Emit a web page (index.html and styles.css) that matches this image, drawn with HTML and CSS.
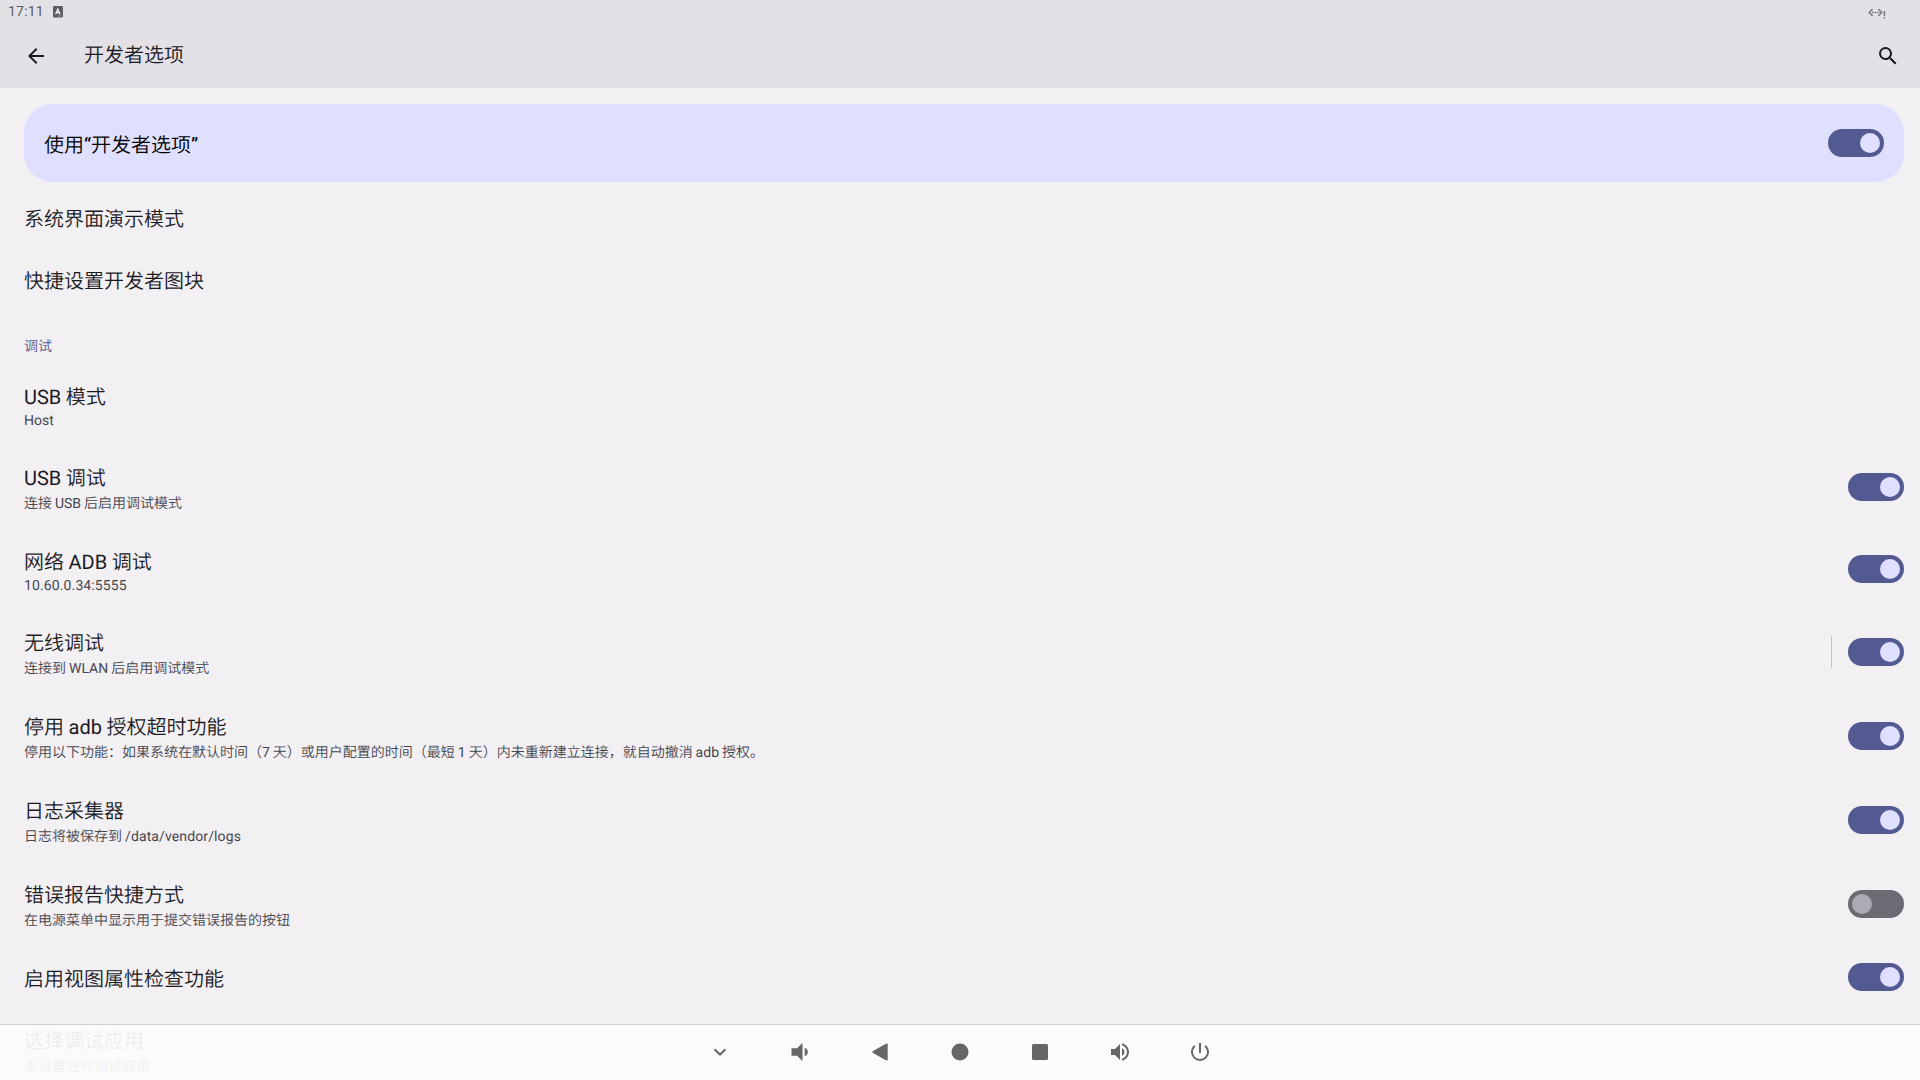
FILE: index.html
```html
<!DOCTYPE html>
<html lang="zh-CN">
<head>
<meta charset="utf-8">
<title>开发者选项</title>
<link rel="stylesheet" href="styles.css">
</head>
<body>
<div class="screen">
  <header class="header">
    <div class="status">
      <span class="clock">17:11</span>
      <svg class="status-app" width="10" height="12" viewBox="0 0 10 12"><rect width="10" height="11.5" rx="1.2" fill="#5c5b5f"/><path d="M2.600 8.200 4.800 3.200 7 8.200M3.300 6.600H6.300" fill="none" stroke="#f4f3f6" stroke-width="1.300"/><path d="M5 10h4" stroke="#aaa9ad" stroke-width="1" stroke-dasharray="1 .7"/></svg>
      <svg class="status-net" width="18" height="12" viewBox="0 0 18 12" fill="none" stroke="#77767a" stroke-width="1.500"><path d="M4.600 1 1.200 4.500 4.600 8M10.400 1 13.800 4.500 10.400 8"/><path d="M4 4.500h8" stroke-dasharray="1.600 1"/><path d="M16.400 3v5M16.400 9v1.500"/></svg>
    </div>
    <div class="toolbar">
      <svg class="back" width="24" height="24" viewBox="0 0 24 24" fill="#1b1b1f"><path d="M20 11H7.830l5.590-5.590L12 4l-8 8 8 8 1.410-1.410L7.830 13H20v-2z"/></svg>
      <h1 class="heading">开发者选项</h1>
      <svg class="search" width="24" height="24" viewBox="0 0 24 24" fill="#1b1b1f"><path d="M15.500 14h-.79l-.28-.27A6.470 6.470 0 0 0 16 9.500 6.500 6.500 0 1 0 9.500 16c1.610 0 3.090-.59 4.230-1.570l.27.28v.79l5 4.990L20.490 19l-4.990-5zm-6 0C7.010 14 5 11.990 5 9.500S7.010 5 9.500 5 14 7.010 14 9.500 11.990 14 9.500 14z"/></svg>
    </div>
  </header>
  <main class="content">
    <section class="main-switch"><span class="title">使用“开发者选项”</span><span class="toggle"></span></section>
    <div class="row single plain"><div class="title">系统界面演示模式</div></div>
    <div class="row single plain"><div class="title">快捷设置开发者图块</div></div>
    <h2 class="category">调试</h2>
    <div class="row"><div class="text"><div class="title">USB 模式</div><div class="summary latin">Host</div></div></div>
    <div class="row"><div class="text"><div class="title">USB 调试</div><div class="summary">连接 USB 后启用调试模式</div></div><span class="toggle"></span></div>
    <div class="row"><div class="text"><div class="title">网络 ADB 调试</div><div class="summary latin"><span class="spaced">10.60.0.34:5555</span></div></div><span class="toggle raised"></span></div>
    <div class="row"><div class="text"><div class="title">无线调试</div><div class="summary">连接到 WLAN 后启用调试模式</div></div><span class="divider"></span><span class="toggle"></span></div>
    <div class="row"><div class="text"><div class="title">停用 adb 授权超时功能</div><div class="summary">停用以下功能：如果系统在默认时间（7 天）或用户配置的时间（最短 1 天）内未重新建立连接，就自动撤消 adb 授权。</div></div><span class="toggle"></span></div>
    <div class="row"><div class="text"><div class="title">日志采集器</div><div class="summary">日志将被保存到 <span class="spaced">/data/vendor/logs</span></div></div><span class="toggle"></span></div>
    <div class="row"><div class="text"><div class="title">错误报告快捷方式</div><div class="summary">在电源菜单中显示用于提交错误报告的按钮</div></div><span class="toggle off"></span></div>
    <div class="row single"><div class="title">启用视图属性检查功能</div><span class="toggle"></span></div>
    <div class="row"><div class="text"><div class="title">选择调试应用</div><div class="summary">未设置任何调试应用</div></div></div>
  </main>
  <nav class="navbar">
    <svg width="24" height="24" viewBox="0 0 24 24"><path d="M6.500 9.200 12 14.500l5.500-5.300" fill="none" stroke="#666" stroke-width="2"/></svg>
    <svg width="24" height="24" viewBox="0 0 24 24"><path d="M3.500 8.200H9L14.500 3v18L9 15.800H3.500zM16.700 7.800c2 .8 3.200 2.300 3.200 4.200s-1.200 3.400-3.200 4.200z"/></svg>
    <svg width="24" height="24" viewBox="0 0 24 24"><path d="M18 3.700Q19.700 3 19.700 4.700V19.300Q19.700 21 18 20.300L5 13Q3.400 12 5 11z"/></svg>
    <svg width="24" height="24" viewBox="0 0 24 24"><circle cx="12" cy="12" r="8.500"/></svg>
    <svg width="24" height="24" viewBox="0 0 24 24"><rect x="4" y="4" width="16" height="16" rx="1.500"/></svg>
    <svg width="24" height="24" viewBox="0 0 24 24"><path d="M3 9v6h4l5 5V4L7 9H3zm13.500 3c0-1.770-1.020-3.290-2.500-4.030v8.050c1.480-.73 2.500-2.250 2.500-4.020zM14 3.230v2.060c2.890.86 5 3.540 5 6.710s-2.110 5.850-5 6.710v2.060c4.010-.91 7-4.490 7-8.770s-2.990-7.860-7-8.770z"/></svg>
    <svg width="24" height="24" viewBox="0 0 24 24"><path d="M13 3h-2v10h2V3zm4.830 2.170-1.420 1.420A6.920 6.920 0 0 1 19 12c0 3.870-3.130 7-7 7s-7-3.130-7-7c0-2.190 1.010-4.140 2.580-5.420L6.170 5.170A8.932 8.932 0 0 0 3 12a9 9 0 0 0 18 0c0-2.740-1.230-5.180-3.170-6.830z"/></svg>
  </nav>
</div>
</body>
</html>
```

FILE: styles.css
```css
* { box-sizing: border-box; }
body { margin: 0; font-family: Roboto, "Noto Sans CJK SC DemiLight", "Noto Sans CJK SC Light", "Noto Sans CJK SC", sans-serif; text-rendering: geometricPrecision; }
.screen { position: relative; width: 1920px; height: 1080px; overflow: hidden; background: #f2f0f3; color: #1b1b1f; }
.header { height: 88px; background: #e3e1e6; }
.status { display: flex; align-items: center; height: 24px; padding: 0 34px 0 8px; }
.clock { padding-top: 1px; font-size: 14px; line-height: 23px; letter-spacing: .2px; color: #5e5d61; }
.status-app { margin-left: 9px; }
.status-net { margin-left: auto; margin-top: 4px; }
.toolbar { display: flex; align-items: center; height: 64px; padding: 0 20px 0 24px; }
.heading { flex: 1; margin: 0 0 0 36px; padding-bottom: 2px; font-size: 20px; font-weight: 400; line-height: 28px; }
.content { padding: 16px 16px 0 24px; }
.main-switch { display: flex; align-items: center; justify-content: space-between; height: 78px; margin-bottom: 5px; padding: 0 20px; border-radius: 28px; background: #dfe0ff; color: #000; }
.row { display: flex; align-items: center; }
.text { flex: 1; padding: 19px 0 15px; }
.title { font-size: 20px; line-height: 28px; word-spacing: -.4px; }
.summary { margin-top: 2px; font-size: 14px; line-height: 20px; word-spacing: -.5px; color: #46464f; }
.latin { line-height: 17px; }
.spaced { letter-spacing: .12px; }
.main-switch .title, .single .title { padding-top: 3px; }
.single.plain .title { padding-top: 1px; }
.single { height: 62px; justify-content: space-between; }
.category { height: 53px; margin: 0; padding-top: 26px; font-size: 14px; font-weight: 400; line-height: 20px; color: #535a92; }
.toggle { display: flex; width: 56px; height: 28px; padding: 4px; border-radius: 14px; background: #535a92; justify-content: flex-end; }
.toggle::before { content: ""; width: 20px; height: 20px; border-radius: 50%; background: #dfe0ff; }
.toggle.raised { margin-bottom: 1px; }
.toggle.off { justify-content: flex-start; background: #6b6b73; }
.toggle.off::before { background: #acaab4; }
.divider { width: 1px; height: 32px; margin-right: 16px; background: #c6c5ca; }
.navbar { position: absolute; left: 0; right: 0; bottom: 0; display: flex; justify-content: center; align-items: center; gap: 56px; height: 56px; padding-bottom: 1px; border-top: 1px solid #d0ced2; background: rgba(252, 252, 252, .93); fill: #666; }
```
